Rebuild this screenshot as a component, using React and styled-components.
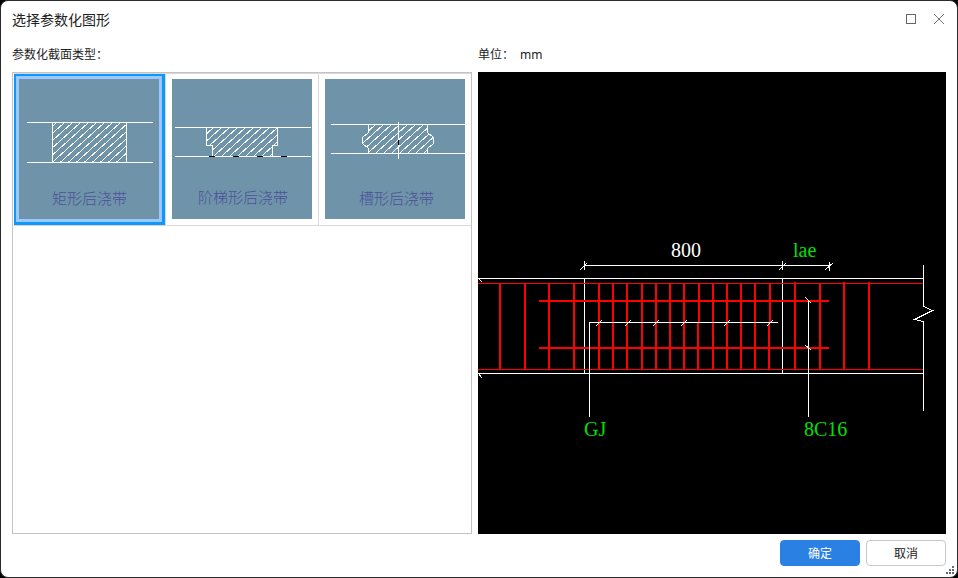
import React, { useState } from "react";
import styled, { createGlobalStyle } from "styled-components";

const sectionTypes = [
  {
    id: "rect",
    label: "矩形后浇带",
    labelX: 33,
    labelY: 125,
    lines: [
      [7, 43, 133, 43],
      [7, 83, 133, 83],
    ],
    outline: "33,43 107,43 107,83 33,83",
    hatchX: 45,
    hatchY: 43,
  },
  {
    id: "step",
    label: "阶梯形后浇带",
    labelX: 26,
    labelY: 124,
    lines: [
      [2, 48, 138, 48],
      [2, 77, 138, 77],
    ],
    outline: "34,48 105,48 105,66 100,66 100,77 40,77 40,66 34,66",
    hatchX: 41,
    hatchY: 48,
    marks: [
      [36, 77, 42, 77],
      [60, 77, 66, 77],
      [84, 77, 90, 77],
      [108, 77, 114, 77],
    ],
  },
  {
    id: "groove",
    label: "槽形后浇带",
    labelX: 34,
    labelY: 125,
    lines: [
      [5, 45, 140, 45],
      [5, 74, 140, 74],
      [73, 42, 73, 79],
    ],
    outline:
      "43,45 102,45 102,53 108,58 108,64 102,69 102,74 43,74 43,69 37,64 37,58 43,53",
    hatchX: 50,
    hatchY: 45,
    marks: [[73, 60, 73, 65]],
  },
];

const hatchSteps = [-3, -2, -1, 0, 1, 2, 3, 4, 5, 6, 7, 8, 9, 10, 11, 12];

// full height stirrups, [x, top]
const stirrups = [
  [500, 283],
  [525, 283],
  [549, 283],
  [574, 283],
  [599, 283],
  [613, 283],
  [627, 283],
  [642, 283],
  [656, 283],
  [670, 283],
  [684, 283],
  [713, 283],
  [727, 283],
  [741, 283],
  [755, 283],
  [795, 282],
  [820, 283],
  [844, 282],
  [869, 282],
];

const stirrupTicks = [596, 625, 653, 681, 724, 767];

function SectionThumb({ type }) {
  const clipId = `clip-${type.id}`;
  return (
    <Thumb viewBox="0 0 140 140" aria-hidden="true">
      <clipPath id={clipId}>
        <polygon points={type.outline} />
      </clipPath>
      <g
        stroke="#fff"
        fill="none"
        transform="translate(0.5 0.5)"
        shapeRendering="crispEdges"
      >
        <g clipPath={`url(#${clipId})`}>
          {hatchSteps.map((n) => {
            const x = type.hatchX + n * 8;
            return (
              <line
                key={n}
                x1={x}
                y1={type.hatchY}
                x2={x - 50}
                y2={type.hatchY + 45}
              />
            );
          })}
        </g>
        <polygon points={type.outline} />
        {type.lines.map(([x1, y1, x2, y2]) => (
          <line key={`${x1}-${y1}`} x1={x1} y1={y1} x2={x2} y2={y2} />
        ))}
        {type.marks?.map(([x1, y1, x2, y2]) => (
          <line
            key={`${x1}-${y1}`}
            x1={x1}
            y1={y1}
            x2={x2}
            y2={y2}
            stroke="#000"
          />
        ))}
      </g>
      <ThumbLabel x={type.labelX} y={type.labelY}>
        {type.label}
      </ThumbLabel>
    </Thumb>
  );
}

function Drawing() {
  return (
    <DrawingSvg viewBox="478 72 468 462" role="img" aria-label="矩形后浇带">
      <g fill="none" shapeRendering="crispEdges">
        <path stroke="#fff" d="M584.5 278V373M782.5 278V373" />

        <g stroke="#f00">
          <path d="M478 283.5H923M478 369.5H923" />
          <g strokeWidth="2">
            {stirrups.map(([x, top]) => (
              <line key={x} x1={x} y1={top} x2={x} y2="369" />
            ))}
            <path d="M699 283V322M698 322V369M770 283V322M769 322V369" />
            <path d="M539 301H829M539 348H829" />
          </g>
        </g>

        <g stroke="#fff">
          <path d="M478 278.5H923M478 373.5H923" />
          <path d="M584 265.5H829M584.5 261V270M782.5 261V270M829.5 262V271" />
          <path d="M589.5 417V322.5H778M808.5 300V417" />
          <path d="M580 270L587 263M779 270L786 263M825 270L833 263" />
          <path d="M478 278L482 282M478 373L482 378" />
          {stirrupTicks.map((x) => (
            <line key={x} x1={x} y1="326" x2={x + 6} y2="320" />
          ))}
          <path d="M805 297L811 303M805 345L811 350" />
          <path d="M923.5 265V306.5L932.5 310.5L914.5 319.5L923.5 321.5V411" />
        </g>
      </g>

      <DrawingText x="671" y="257" fill="#fff">
        800
      </DrawingText>
      <DrawingText x="793" y="257">
        lae
      </DrawingText>
      <DrawingText x="584" y="436">
        GJ
      </DrawingText>
      <DrawingText x="804" y="436">
        8C16
      </DrawingText>
    </DrawingSvg>
  );
}

function App() {
  const [selected, setSelected] = useState("rect");

  return (
    <>
      <GlobalStyle />
      <Dialog role="dialog" aria-labelledby="dialog-title" lang="zh-CN">
        <TitleBar>
          <Title id="dialog-title">选择参数化图形</Title>
          <WindowButton type="button" aria-label="最大化">
            <svg width="12" height="12" fill="none" stroke="#666">
              <rect x="1.5" y="1.5" width="9" height="9" />
            </svg>
          </WindowButton>
          <WindowButton type="button" aria-label="关闭">
            <svg width="12" height="12" fill="none" stroke="#777">
              <path d="M1 1L11 11M11 1L1 11" />
            </svg>
          </WindowButton>
        </TitleBar>

        <Content>
          <Panel>
            <Caption id="type-caption">参数化截面类型：</Caption>
            <TypeList role="group" aria-labelledby="type-caption">
              {sectionTypes.map((type) => (
                <TypeCell key={type.id}>
                  <TypeButton
                    type="button"
                    aria-label={type.label}
                    aria-pressed={selected === type.id}
                    $selected={selected === type.id}
                    onClick={() => setSelected(type.id)}
                  >
                    <SectionThumb type={type} />
                  </TypeButton>
                </TypeCell>
              ))}
            </TypeList>
          </Panel>
          <Panel>
            <Caption>
              单位：<Unit>mm</Unit>
            </Caption>
            <Preview>
              <Drawing />
            </Preview>
          </Panel>
        </Content>

        <Footer>
          <Button type="button" $primary>
            确定
          </Button>
          <Button type="button">取消</Button>
        </Footer>
        <ResizeGrip width="8" height="8" fill="#666b73" aria-hidden="true">
          <path d="M6 0h2v2h-2zM3 3h2v2h-2zM6 3h2v2h-2zM0 6h2v2h-2zM3 6h2v2h-2zM6 6h2v2h-2z" />
        </ResizeGrip>
      </Dialog>
    </>
  );
}

export default App;

const GlobalStyle = createGlobalStyle`
  * {
    box-sizing: border-box;
  }

  body {
    margin: 0;
    background-color: #000;
    color: #222;
    font-family: "Noto Sans", "Noto Sans CJK SC", sans-serif;
    font-size: 12px;
  }
`;

const Dialog = styled.div`
  position: relative;
  display: flex;
  flex-direction: column;
  min-height: 100vh;
  padding: 0 11px 11px;
  border: 1px solid #2b2b2b;
  border-radius: 8px;
  background-color: #fff;
`;

const TitleBar = styled.header`
  display: flex;
  align-items: center;
  height: 36px;
  gap: 8px;
`;

const Title = styled.h1`
  flex: 1;
  margin: 0;
  font-size: 14px;
  font-weight: 400;
`;

const WindowButton = styled.button`
  display: flex;
  align-items: center;
  justify-content: center;
  width: 20px;
  height: 20px;
  padding: 0;
  border: none;
  background: none;
  cursor: pointer;

  &:last-child {
    margin-right: -3px;
  }
`;

const Content = styled.main`
  flex: 1;
  display: grid;
  grid-template-columns: 460px 1fr;
  gap: 6px;
`;

const Panel = styled.section`
  display: flex;
  flex-direction: column;
  min-width: 0;
`;

const Caption = styled.div`
  height: 35px;
  line-height: 36px;
`;

const Unit = styled.span`
  margin-left: 6px;
`;

const TypeList = styled.div`
  flex: 1;
  display: flex;
  flex-wrap: wrap;
  align-content: flex-start;
  border: 1px solid #c3c3c3;
  overflow: hidden;
`;

const TypeCell = styled.div`
  border: 1px solid #d8d8d8;
  border-left-color: transparent;

  &:nth-child(3n) {
    margin-right: -1px;
  }
`;

const TypeButton = styled.button`
  display: block;
  padding: 3px;
  border: 2px solid ${(props) => (props.$selected ? "#0d98ff" : "#fff")};
  border-right-width: 3px;
  border-bottom-width: 3px;
  background-color: ${(props) => (props.$selected ? "#9ac8ff" : "#fff")};
  cursor: pointer;
`;

const Thumb = styled.svg`
  display: block;
  width: 140px;
  height: 140px;
  background-color: #6f93a9;
`;

const ThumbLabel = styled.text`
  fill: #4a5198;
  font-family: "Noto Sans CJK SC", sans-serif;
  font-size: 15px;
  font-weight: 300;
`;

const Preview = styled.div`
  flex: 1;
  display: flex;
  align-items: center;
  justify-content: center;
  background-color: #000;
`;

const DrawingSvg = styled.svg`
  width: 100%;
  height: auto;
`;

const DrawingText = styled.text`
  fill: ${(props) => props.fill || "#00e000"};
  font-family: "Liberation Serif", serif;
  font-size: 20px;
`;

const Footer = styled.footer`
  display: flex;
  justify-content: flex-end;
  gap: 6px;
  padding-top: 6px;
`;

const Button = styled.button`
  width: 80px;
  height: 26px;
  padding: 0;
  border: 1px solid ${(props) => (props.$primary ? "#2b80e3" : "#c8c8c8")};
  border-radius: 4px;
  background-color: ${(props) => (props.$primary ? "#2b80e3" : "#fff")};
  color: ${(props) => (props.$primary ? "#fff" : "#222")};
  font-family: inherit;
  font-size: 12px;
  cursor: pointer;
`;

const ResizeGrip = styled.svg`
  position: absolute;
  right: 3px;
  bottom: 3px;
`;
